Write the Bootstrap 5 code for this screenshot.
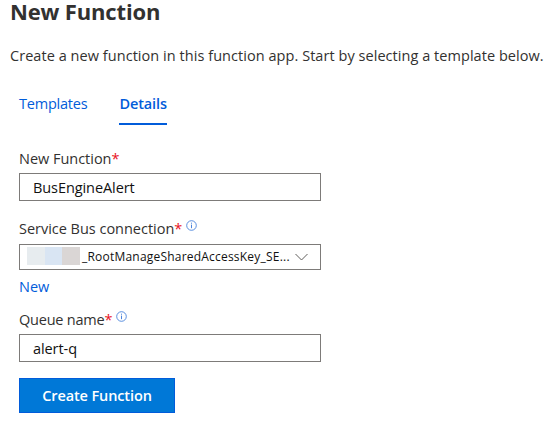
<!DOCTYPE html>
<html lang="en">
<head>
<meta charset="utf-8">
<meta name="viewport" content="width=device-width, initial-scale=1">
<title>New Function</title>
<link href="https://cdn.jsdelivr.net/npm/bootstrap@5.3.0/dist/css/bootstrap.min.css" rel="stylesheet">
<style>
body{font-family:"Open Sans","Noto Sans",sans-serif;font-size:14.5px;line-height:20px;color:#323130;background:#fff;overflow:hidden}
.page-title{font-size:22px;font-weight:700;line-height:22px;margin:0;padding-left:10px;color:#323130;letter-spacing:-.15px}
.intro{margin:24px 0 0 10px;white-space:nowrap;letter-spacing:.05px}
.fn-tabs{margin-top:28px;gap:32px}
.fn-tabs .nav-link{padding:0 0 9px;color:#015cda;border-bottom:2px solid transparent;letter-spacing:-.22px}
.fn-tabs .nav-link.active{font-weight:600;border-color:#015cda;letter-spacing:-.1px}
.fn-form{width:321px;padding-left:19px}
.form-label{display:flex;align-items:flex-start;height:20px;margin:0 0 4px;white-space:nowrap;letter-spacing:-.02px}
.req{color:#e81123}
.info{margin:1px 0 0 4px}
.form-control{height:28px;border:1px solid #7d7b79;border-radius:0;padding:0 13px;font:inherit;color:#111;letter-spacing:-.08px}
.picker{height:26px;border:1px solid #7d7b79;padding:0 12px 0 7px;font-size:12px;color:#111;white-space:nowrap;background:#fff;width:100%}
.masked{width:53px;height:18px;margin:0 2px 2px 0;background:linear-gradient(90deg,#e7ecef 0 18px,#d9e5f3 18px 35px,#dad6d5 35px)}
.picked{letter-spacing:.21px}
.link-new{color:#015cda;text-decoration:none}
.btn-create{height:35px;width:156px;border-radius:0;padding:0;background:#0078d7;border:1px solid #015cda;color:#fff;font-size:14.5px;font-weight:600;letter-spacing:-.12px}
.f-name{margin-top:24px}
.f-conn{margin-top:18px}
.f-conn .form-label{margin-bottom:5px}
.link-new{margin-top:7px}
.f-queue{margin-top:13px}
.f-queue .form-label{letter-spacing:-.22px}
.btn-create{margin-top:16px}
</style>
</head>
<body>
<main>
  <h1 class="page-title">New Function</h1>
  <p class="intro">Create a new function in this function app. Start by selecting a template below.</p>
  <div class="fn-form">
    <nav class="nav fn-tabs">
      <a class="nav-link" href="#">Templates</a>
      <a class="nav-link active" href="#">Details</a>
    </nav>
    <form>
      <div class="f-name">
        <label class="form-label" for="fname">New Function<span class="req">*</span></label>
        <input id="fname" class="form-control" value="BusEngineAlert">
      </div>
      <div class="f-conn">
        <label class="form-label">Service Bus connection<span class="req">*</span>
          <svg class="info" width="11" height="11" viewBox="0 0 11 11" fill="none" stroke="#4a83dc"><circle cx="5.5" cy="5.5" r="4.8" stroke-width=".9"/><path d="M5.5 4.6v3.6M5.5 2.7v1"/></svg>
        </label>
        <button type="button" class="picker d-flex align-items-center">
          <span class="masked"></span><span class="picked">_RootManageSharedAccessKey_SE...</span>
          <svg class="ms-auto" width="13" height="8" viewBox="0 0 13 8" fill="none" stroke="#605e5c"><path d="M.5 1l6 6 6-6"/></svg>
        </button>
        <a class="link-new d-inline-block" href="#">New</a>
      </div>
      <div class="f-queue">
        <label class="form-label" for="queue">Queue name<span class="req">*</span>
          <svg class="info" width="11" height="11" viewBox="0 0 11 11" fill="none" stroke="#4a83dc"><circle cx="5.5" cy="5.5" r="4.8" stroke-width=".9"/><path d="M5.5 4.6v3.6M5.5 2.7v1"/></svg>
        </label>
        <input id="queue" class="form-control" value="alert-q">
      </div>
      <button type="button" class="btn btn-primary btn-create">Create Function</button>
    </form>
  </div>
</main>
<script src="https://cdn.jsdelivr.net/npm/bootstrap@5.3.0/dist/js/bootstrap.bundle.min.js"></script>
</body>
</html>
